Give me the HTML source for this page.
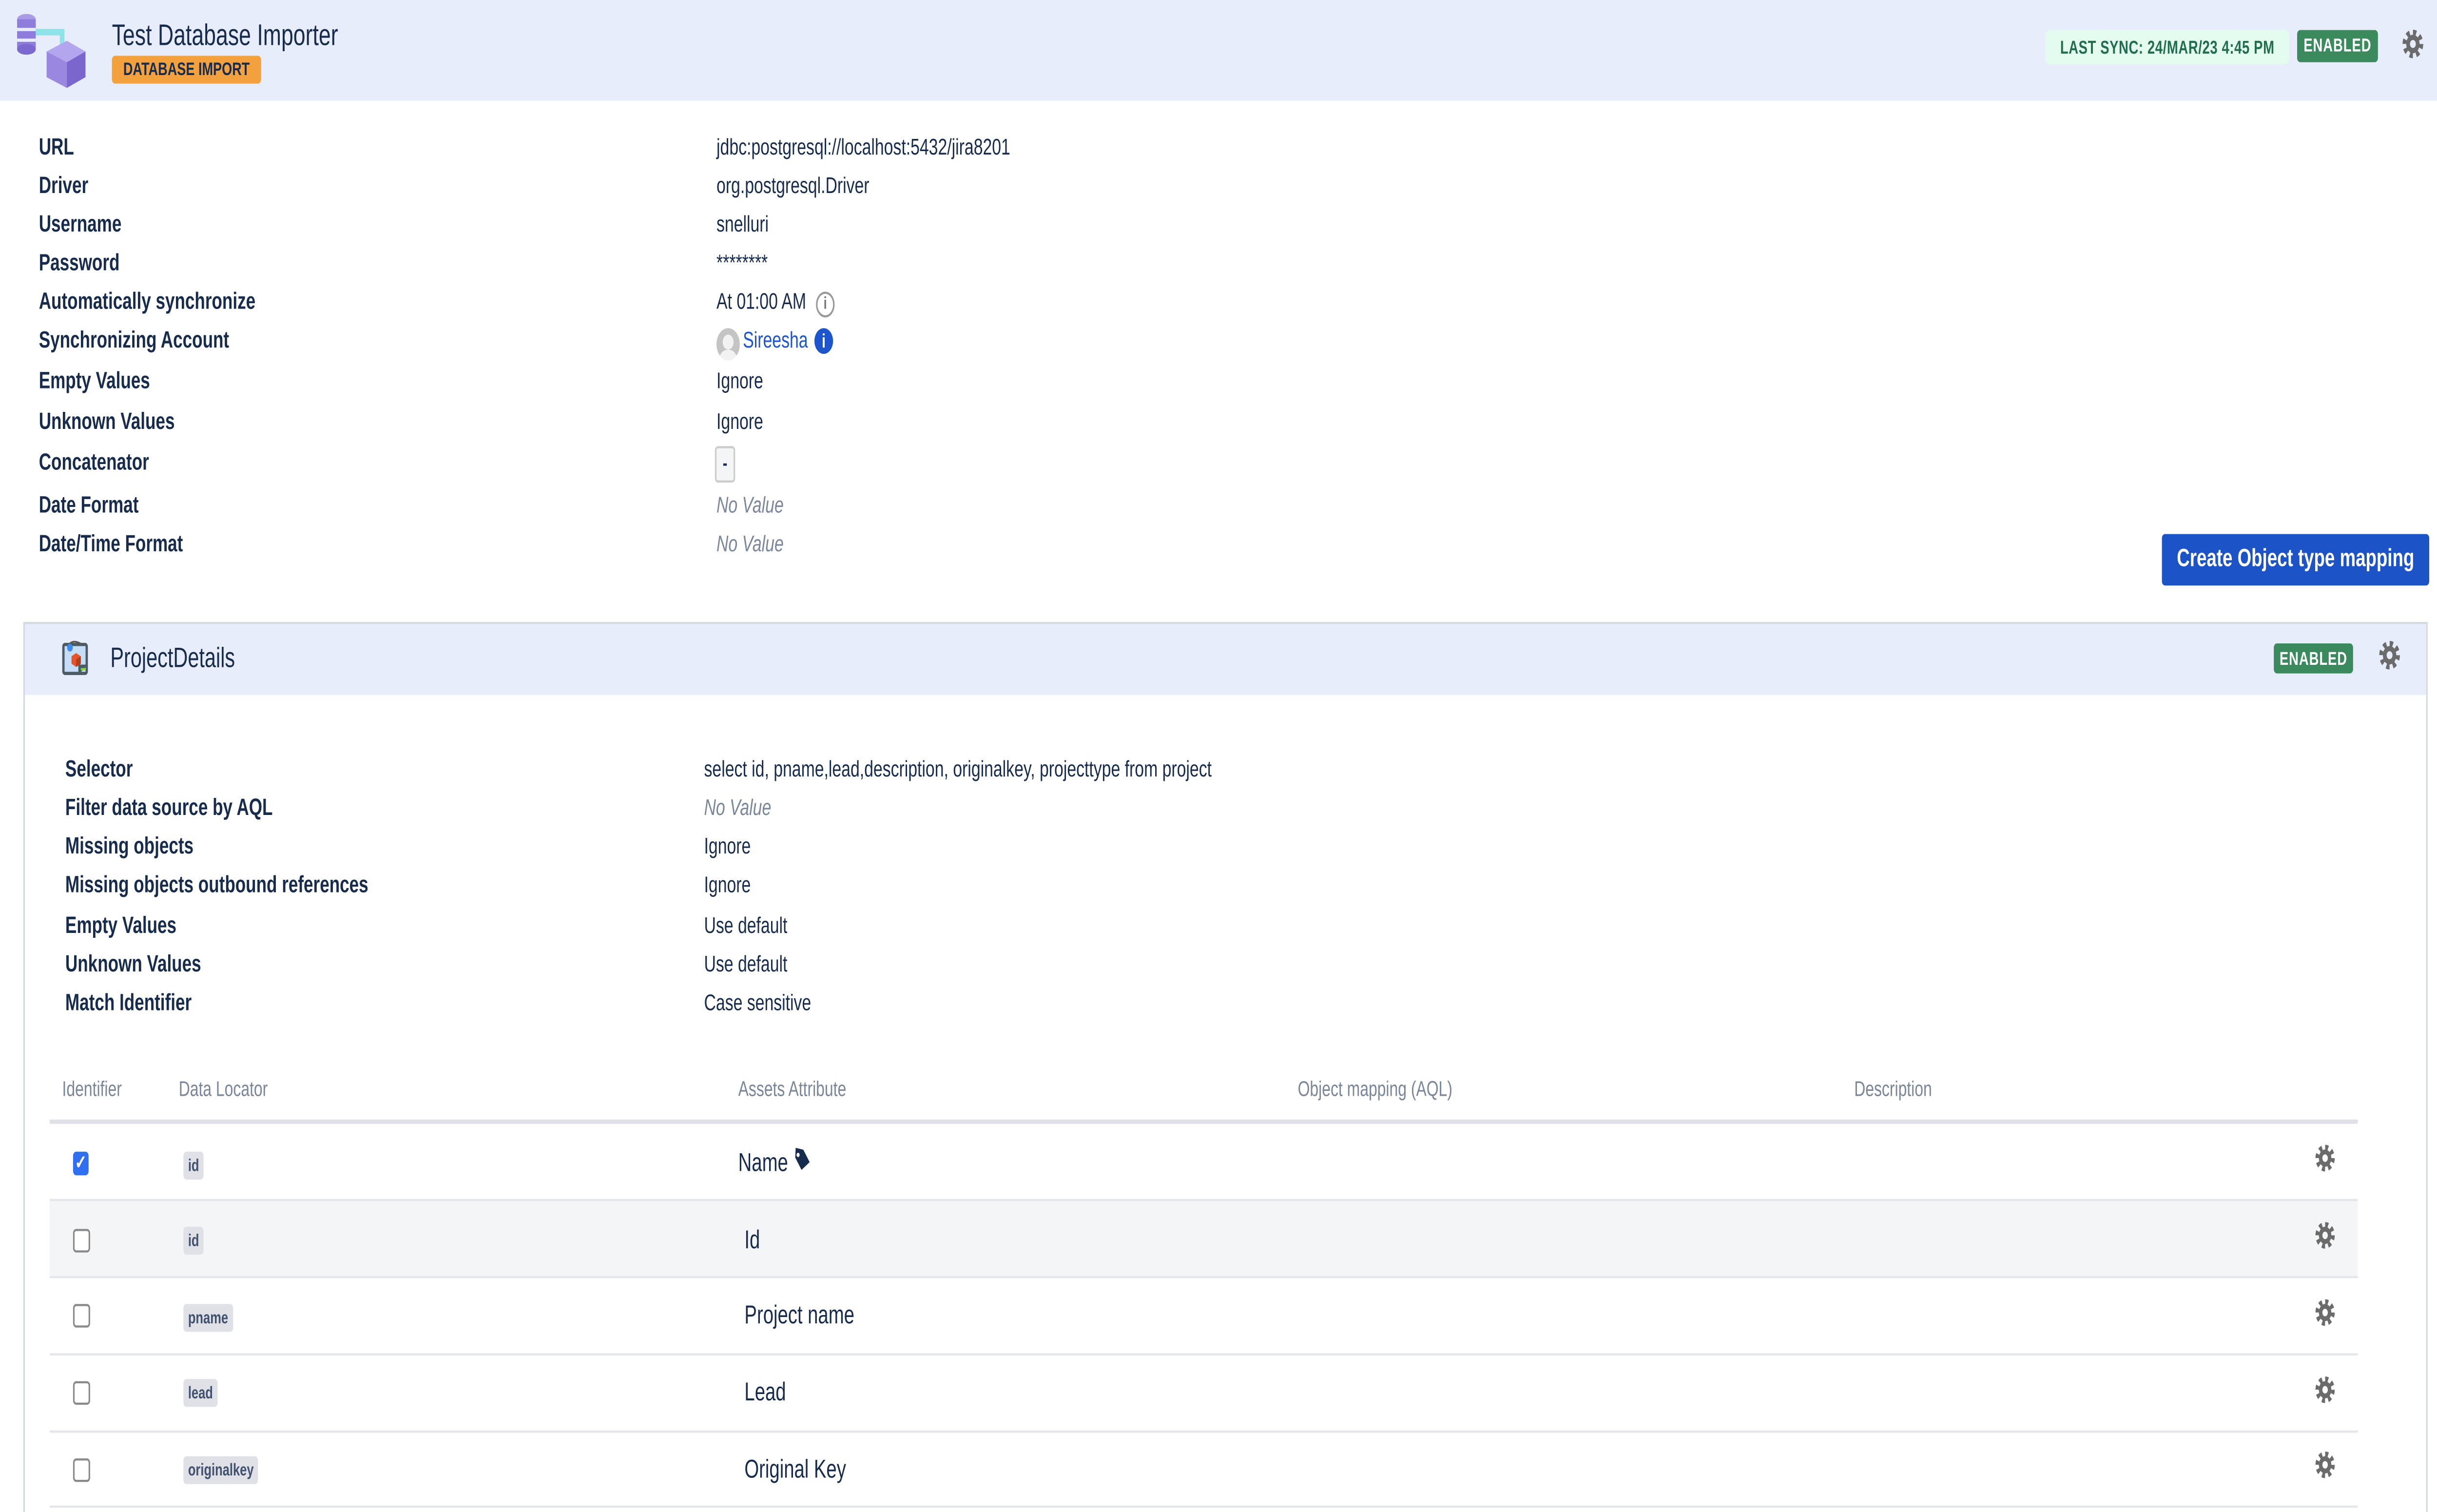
<!DOCTYPE html>
<html><head><meta charset="utf-8"><style>
html,body{margin:0;padding:0;background:#fff;overflow:hidden;}
#w{position:absolute;left:0;top:0;width:1568px;height:705px;overflow:hidden;transform:scale(4.40306);transform-origin:0 0;font-family:"Liberation Sans",Arial,sans-serif;color:#172b4d;}
.a{position:absolute;white-space:nowrap;}
.lb{font-weight:bold;font-size:11px;}
.v{font-size:10.6px;}
.nv{font-style:italic;color:#7a869a;}
.loz{background:#dfe1e6;border-radius:2px;font-size:8px;font-weight:bold;color:#42526e;padding:1px 3px;line-height:11px;}
.gear{position:absolute;width:15px;height:15px;}
.cb{position:absolute;width:9px;height:9px;border:1px solid #8a8a8a;border-radius:2px;background:#fff;}
.th{font-size:10px;color:#7a869a;}
.td{font-size:12px;}
</style></head><body><div id="w">
<div class="a" style="left:0;top:0;width:1568px;height:47px;background:#e7edfa;"></div>
<svg class="a" style="left:8px;top:5px" width="50" height="36" viewBox="0 0 50 36">
<ellipse cx="9" cy="4" rx="6" ry="2.5" fill="#a99be6"/>
<rect x="3" y="4" width="12" height="14" fill="#8e7ddb"/>
<rect x="3" y="8" width="12" height="1.5" fill="#e7edfa"/><rect x="3" y="13" width="12" height="1.5" fill="#e7edfa"/>
<ellipse cx="9" cy="18" rx="6" ry="2.5" fill="#7b69cf"/>
<path d="M15 10 H32 V19" fill="none" stroke="#8ee3e8" stroke-width="3"/>
<path d="M28 18 L32 23 L36 18Z" fill="#79d9e0"/>
<path d="M22 19 L35 14 L47 19 L35 24Z" fill="#b4a6ee"/>
<path d="M22 19 V31 L35 36 V24Z" fill="#9a87e0"/>
<path d="M47 19 V31 L35 36 V24Z" fill="#7a66cc"/>
</svg>
<div class="a" style="left:72px;top:8px;font-size:14px;color:#172b4d;">Test Database Importer</div>
<div class="a" style="left:72px;top:26px;width:96px;height:13px;background:#f3a13e;border-radius:2px;font-size:8.5px;font-weight:bold;color:#172b4d;text-align:center;line-height:13px;">DATABASE IMPORT</div>
<div class="a" style="left:1316px;top:14px;width:157px;height:16px;background:#e3fcef;border-radius:3px;font-size:8.6px;font-weight:bold;color:#216e4e;text-align:center;line-height:16px;letter-spacing:.2px;">LAST SYNC: 24/MAR/23 4:45 PM</div>
<div class="a" style="left:1478px;top:14px;width:52px;height:15px;background:#3b8a5e;border-radius:2px;font-size:8.6px;font-weight:bold;color:#fff;text-align:center;line-height:15px;letter-spacing:.3px;">ENABLED</div>
<svg class="gear" style="left:1545px;top:13px" viewBox="0 0 16 16"><circle cx="8" cy="8" r="5.6" fill="none" stroke="#6b6b6b" stroke-width="3" stroke-dasharray="2.2 2.2"/><circle cx="8" cy="8" r="4.6" fill="#6b6b6b"/><circle cx="8" cy="8" r="2" fill="#e7edfa"/></svg>

<div class="a lb" style="left:25px;top:63px">URL</div>
<div class="a lb" style="left:25px;top:81px">Driver</div>
<div class="a lb" style="left:25px;top:99px">Username</div>
<div class="a lb" style="left:25px;top:117px">Password</div>
<div class="a lb" style="left:25px;top:135px">Automatically synchronize</div>
<div class="a lb" style="left:25px;top:153px">Synchronizing Account</div>
<div class="a lb" style="left:25px;top:172px">Empty Values</div>
<div class="a lb" style="left:25px;top:191px">Unknown Values</div>
<div class="a lb" style="left:25px;top:210px">Concatenator</div>
<div class="a lb" style="left:25px;top:230px">Date Format</div>
<div class="a lb" style="left:25px;top:248px">Date/Time Format</div>

<div class="a v" style="left:461px;top:63px">jdbc:postgresql://localhost:5432/jira8201</div>
<div class="a v" style="left:461px;top:81px">org.postgresql.Driver</div>
<div class="a v" style="left:461px;top:99px">snelluri</div>
<div class="a v" style="left:461px;top:117px">********</div>
<div class="a v" style="left:461px;top:135px">At 01:00 AM</div>
<div class="a" style="left:525px;top:136px;width:10px;height:10px;border:1px solid #999;border-radius:50%;font-size:8px;color:#777;text-align:center;line-height:10px;font-weight:bold;">i</div>
<div class="a" style="left:461px;top:153px;width:15px;height:15px;border-radius:50%;background:#c4c4c4;overflow:hidden;"><div style="position:absolute;left:4px;top:3px;width:7px;height:7px;border-radius:50%;background:#f2f2f2"></div><div style="position:absolute;left:2px;top:10px;width:11px;height:8px;border-radius:50%;background:#f2f2f2"></div></div>
<div class="a v" style="left:478px;top:153px;color:#1d55cc">Sireesha</div>
<div class="a" style="left:524px;top:153px;width:12px;height:12px;border-radius:50%;background:#1d55cc;font-size:9px;color:#fff;text-align:center;line-height:12px;font-weight:bold;">i</div>
<div class="a v" style="left:461px;top:172px">Ignore</div>
<div class="a v" style="left:461px;top:191px">Ignore</div>
<div class="a" style="left:460px;top:208px;width:11px;height:15px;border:1px solid #ccc;border-radius:2px;background:#f4f5f7;font-size:9px;text-align:center;line-height:15px;font-weight:bold;">-</div>
<div class="a v nv" style="left:461px;top:230px">No Value</div>
<div class="a v nv" style="left:461px;top:248px">No Value</div>

<div class="a" style="left:1391px;top:249px;width:172px;height:24px;background:#1c54c8;border-radius:2px;color:#fff;font-weight:bold;font-size:11.5px;text-align:center;line-height:24px;">Create Object type mapping</div>

<div class="a" style="left:15px;top:290px;width:1545px;height:420px;border:1px solid #d5d9e0;border-bottom:none;"></div>
<div class="a" style="left:16px;top:291px;width:1545px;height:33px;background:#e7edfa;"></div>
<svg class="a" style="left:40px;top:298px" width="17" height="17" viewBox="0 0 17 17">
<path d="M5 2 Q8 0 14 3" fill="none" stroke="#555" stroke-width=".8"/>
<rect x="0.8" y="2.5" width="15" height="13.5" rx="1" fill="#c6ddf7" stroke="#4b5a63" stroke-width="1.5"/>
<path d="M11 16 V12.5 H16" fill="#4b5a63" stroke="#4b5a63" stroke-width="1.2"/>
<rect x="12" y="13.5" width="3.2" height="1" fill="#7fdc3a"/>
<circle cx="5" cy="4" r="1.8" fill="#3d8bef"/>
<path d="M6 8 L9 6.5 L12 8 V11.5 L9 13 L6 11.5Z" fill="#e5542b"/>
<path d="M9 9.5 L12 8 V11.5 L9 13Z" fill="#b23e1d"/>
</svg>
<div class="a" style="left:71px;top:299px;font-size:13px;">ProjectDetails</div>
<div class="a" style="left:1463px;top:300px;width:51px;height:14px;background:#3b8a5e;border-radius:2px;font-size:8.6px;font-weight:bold;color:#fff;text-align:center;line-height:14px;letter-spacing:.3px;">ENABLED</div>
<svg class="gear" style="left:1530px;top:298px" viewBox="0 0 16 16"><circle cx="8" cy="8" r="5.6" fill="none" stroke="#6b6b6b" stroke-width="3" stroke-dasharray="2.2 2.2"/><circle cx="8" cy="8" r="4.6" fill="#6b6b6b"/><circle cx="8" cy="8" r="2" fill="#e7edfa"/></svg>

<div class="a lb" style="left:42px;top:353px">Selector</div>
<div class="a lb" style="left:42px;top:371px">Filter data source by AQL</div>
<div class="a lb" style="left:42px;top:389px">Missing objects</div>
<div class="a lb" style="left:42px;top:407px">Missing objects outbound references</div>
<div class="a lb" style="left:42px;top:426px">Empty Values</div>
<div class="a lb" style="left:42px;top:444px">Unknown Values</div>
<div class="a lb" style="left:42px;top:462px">Match Identifier</div>
<div class="a v" style="left:453px;top:353px">select id, pname,lead,description, originalkey, projecttype from project</div>
<div class="a v nv" style="left:453px;top:371px">No Value</div>
<div class="a v" style="left:453px;top:389px">Ignore</div>
<div class="a v" style="left:453px;top:407px">Ignore</div>
<div class="a v" style="left:453px;top:426px">Use default</div>
<div class="a v" style="left:453px;top:444px">Use default</div>
<div class="a v" style="left:453px;top:462px">Case sensitive</div>

<div class="a th" style="left:40px;top:503px">Identifier</div>
<div class="a th" style="left:115px;top:503px">Data Locator</div>
<div class="a th" style="left:475px;top:503px">Assets Attribute</div>
<div class="a th" style="left:835px;top:503px">Object mapping (AQL)</div>
<div class="a th" style="left:1193px;top:503px">Description</div>
<div class="a" style="left:32px;top:522px;width:1485px;height:2px;background:#dfe1e6"></div>

<div class="a" style="left:32px;top:560px;width:1485px;height:36px;background:#f4f5f7"></div>
<div class="a" style="left:32px;top:559px;width:1485px;height:1px;background:#e4e6ea"></div>
<div class="a" style="left:32px;top:595px;width:1485px;height:1px;background:#e4e6ea"></div>
<div class="a" style="left:32px;top:631px;width:1485px;height:1px;background:#e4e6ea"></div>
<div class="a" style="left:32px;top:667px;width:1485px;height:1px;background:#e4e6ea"></div>
<div class="a" style="left:32px;top:702px;width:1485px;height:1px;background:#e4e6ea"></div>

<div class="a" style="left:47px;top:537px;width:10px;height:11px;background:#2f6ff0;border-radius:2px;color:#fff;font-size:9px;line-height:11px;text-align:center;font-weight:bold;">✓</div>
<div class="cb" style="left:47px;top:573px"></div>
<div class="cb" style="left:47px;top:608px"></div>
<div class="cb" style="left:47px;top:644px"></div>
<div class="cb" style="left:47px;top:680px"></div>

<div class="a loz" style="left:118px;top:537px">id</div>
<div class="a loz" style="left:118px;top:572px">id</div>
<div class="a loz" style="left:118px;top:608px">pname</div>
<div class="a loz" style="left:118px;top:643px">lead</div>
<div class="a loz" style="left:118px;top:679px">originalkey</div>

<div class="a td" style="left:475px;top:535px">Name</div>
<svg class="a" style="left:510px;top:535px" width="12" height="12" viewBox="0 0 12 12"><path d="M1 1 H6 L11 6 L6.5 10.5 L1.5 5.5Z" fill="#172b4d" transform="rotate(10 6 6)"/><circle cx="3.5" cy="3.5" r="1" fill="#fff"/></svg>
<div class="a td" style="left:479px;top:571px">Id</div>
<div class="a td" style="left:479px;top:606px">Project name</div>
<div class="a td" style="left:479px;top:642px">Lead</div>
<div class="a td" style="left:479px;top:678px">Original Key</div>

<svg class="gear" style="left:1489px;top:533px;width:14px;height:14px" viewBox="0 0 16 16"><circle cx="8" cy="8" r="5.6" fill="none" stroke="#6b6b6b" stroke-width="3" stroke-dasharray="2.2 2.2"/><circle cx="8" cy="8" r="4.6" fill="#6b6b6b"/><circle cx="8" cy="8" r="2" fill="#fff"/></svg>
<svg class="gear" style="left:1489px;top:569px;width:14px;height:14px" viewBox="0 0 16 16"><circle cx="8" cy="8" r="5.6" fill="none" stroke="#6b6b6b" stroke-width="3" stroke-dasharray="2.2 2.2"/><circle cx="8" cy="8" r="4.6" fill="#6b6b6b"/><circle cx="8" cy="8" r="2" fill="#f4f5f7"/></svg>
<svg class="gear" style="left:1489px;top:605px;width:14px;height:14px" viewBox="0 0 16 16"><circle cx="8" cy="8" r="5.6" fill="none" stroke="#6b6b6b" stroke-width="3" stroke-dasharray="2.2 2.2"/><circle cx="8" cy="8" r="4.6" fill="#6b6b6b"/><circle cx="8" cy="8" r="2" fill="#fff"/></svg>
<svg class="gear" style="left:1489px;top:641px;width:14px;height:14px" viewBox="0 0 16 16"><circle cx="8" cy="8" r="5.6" fill="none" stroke="#6b6b6b" stroke-width="3" stroke-dasharray="2.2 2.2"/><circle cx="8" cy="8" r="4.6" fill="#6b6b6b"/><circle cx="8" cy="8" r="2" fill="#fff"/></svg>
<svg class="gear" style="left:1489px;top:676px;width:14px;height:14px" viewBox="0 0 16 16"><circle cx="8" cy="8" r="5.6" fill="none" stroke="#6b6b6b" stroke-width="3" stroke-dasharray="2.2 2.2"/><circle cx="8" cy="8" r="4.6" fill="#6b6b6b"/><circle cx="8" cy="8" r="2" fill="#fff"/></svg>
</div>
<script>
(function(){var W=window.innerWidth||document.documentElement.clientWidth,H=window.innerHeight||document.documentElement.clientHeight;
if(W>0&&H>0){document.getElementById('w').style.transform='scale('+(W/1568)+','+(H/705)+')';}})();
</script>
</body></html>
